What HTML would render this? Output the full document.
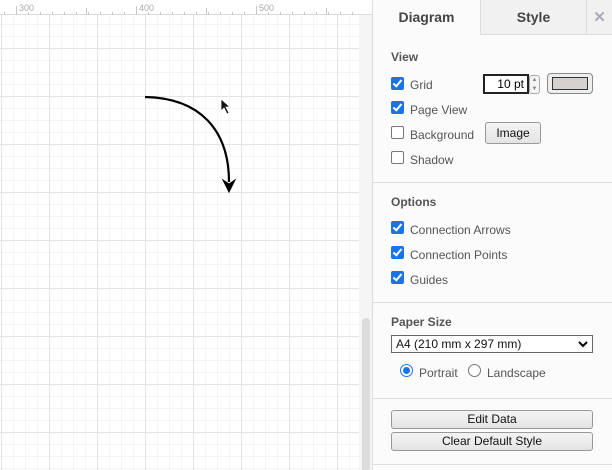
<!DOCTYPE html>
<html><head><style>
*{box-sizing:border-box;margin:0;padding:0}
body{width:612px;height:470px;overflow:hidden;font-family:"Liberation Sans",sans-serif;background:#fff;position:relative}
.abs{position:absolute}
.cv{left:0;top:15px;width:359px;height:455px;
background-color:#fff;
background-image:
linear-gradient(to right,#e4e4e8 1px,transparent 1px),
linear-gradient(to bottom,#e4e4e8 1px,transparent 1px),
linear-gradient(to right,#f4f4f6 1px,transparent 1px),
linear-gradient(to bottom,#f4f4f6 1px,transparent 1px);
background-size:48px 48px,48px 48px,12px 12px,12px 12px;
background-position:1px 33px,1px 33px,1px 33px,1px 33px}
.ruler{left:0;top:0;width:372px;height:15px;background:#fff;border-bottom:1px solid #ddd;font-size:9px;color:#aaa}
.ruler span{position:absolute;top:3px}
.sb{left:359px;top:15px;width:13px;height:455px;background:#f5f5f5}
.thumb{left:362px;top:318px;width:8px;height:152px;background:#dcdcdc;border-radius:4px 4px 0 0}
.panel{left:372px;top:0;width:240px;height:470px;background:#fbfbfb;border-left:1px solid #ddd}
.tab{top:0;height:35px;font-size:14px;font-weight:bold;color:#444;text-align:center;line-height:35px}
.h{font-size:12px;font-weight:bold;color:#555}
.lbl{font-size:12px;color:#555}
.cb{width:13px;height:13px;border-radius:2px}
.cb.on{background:#1a73e8}
.cb.on::after{content:"";position:absolute;left:4px;top:1px;width:3px;height:7px;border:solid #fff;border-width:0 2px 2px 0;transform:rotate(40deg)}
.cb.off{border:1px solid #777;background:#fff}
.sep{left:372px;width:240px;height:1px;background:#ddd}
.btn{border:1px solid #999;border-radius:3px;background:linear-gradient(#f4f4f4,#e4e4e4);font-size:12px;color:#111;text-align:center}
</style></head><body>
<div class="abs cv"></div>
<div class="abs ruler"><span style="left:19px">300</span><span style="left:139px">400</span><span style="left:259px">500</span></div>
<svg class="abs" style="left:0;top:0" width="372" height="470">
<g stroke="#c8c8c8" stroke-width="1">
<path d="M4.5 12v3M16.5 12v3M28.5 12v3M40.5 12v3M52.5 12v3M64.5 12v3M76.5 12v3M88.5 12v3M100.5 12v3M112.5 12v3M124.5 12v3M136.5 12v3M148.5 12v3M160.5 12v3M172.5 12v3M184.5 12v3M196.5 12v3M208.5 12v3M220.5 12v3M232.5 12v3M244.5 12v3M256.5 12v3M268.5 12v3M280.5 12v3M292.5 12v3M304.5 12v3M316.5 12v3M328.5 12v3M340.5 12v3M352.5 12v3"/>
<path d="M16.5 6v9M136.5 6v9M256.5 6v9M86.5 8v7M206.5 8v7M326.5 8v7"/>
</g>
<path d="M145 97 C200 98 229 130 229 182" fill="none" stroke="#000" stroke-width="2.2"/>
<path d="M223 180 L229 192 L235 180 L229 184 Z" fill="#000" stroke="#000" stroke-width="1"/>
<path d="M221 99 L221 111 L224 108 L227 114 L229 113 L226 107 L230 107 Z" fill="#111" stroke="#fff" stroke-width="0.8"/>
</svg>
<div class="abs sb"></div>
<div class="abs thumb"></div>
<div class="abs panel"></div>
<div class="abs tab" style="left:373px;width:107px;background:#fbfbfb">Diagram</div>
<div class="abs tab" style="left:480px;width:106px;background:#f1f1f1;border-left:1px solid #ddd;border-bottom:1px solid #ddd">Style</div>
<div class="abs tab" style="left:586px;width:26px;background:#f1f1f1;border-left:1px solid #ddd;border-bottom:1px solid #ddd;color:#aab;font-size:15px">✕</div>

<div class="abs h" style="left:391px;top:50px">View</div>
<div class="abs cb on" style="left:391px;top:77px"></div>
<div class="abs lbl" style="left:410px;top:78px">Grid</div>
<div class="abs cb on" style="left:391px;top:101px"></div>
<div class="abs lbl" style="left:410px;top:103px">Page View</div>
<div class="abs cb off" style="left:391px;top:126px"></div>
<div class="abs lbl" style="left:410px;top:128px">Background</div>
<div class="abs cb off" style="left:391px;top:151px"></div>
<div class="abs lbl" style="left:410px;top:153px">Shadow</div>
<div class="abs" style="left:483px;top:74px;width:46px;height:20px;border:2px solid #222;background:#fff;font-size:12px;text-align:right;padding-right:3px;line-height:16px">10 pt</div>
<div class="abs" style="left:529px;top:75px;width:11px;height:19px;border:1px solid #aaa;border-radius:3px;background:#f4f4f4;font-size:6px;color:#888;text-align:center;line-height:9px">▲<br>▼</div>
<div class="abs" style="left:547px;top:73px;width:46px;height:21px;border:1px solid #888;border-radius:4px;background:#eee;padding:3px 4px"><div style="width:100%;height:100%;background:#d6d1d1;border:1px solid #333"></div></div>
<div class="abs btn" style="left:485px;top:122px;width:56px;height:22px;line-height:20px">Image</div>
<div class="abs sep" style="top:182px"></div>

<div class="abs h" style="left:391px;top:195px">Options</div>
<div class="abs cb on" style="left:391px;top:221px"></div>
<div class="abs lbl" style="left:410px;top:223px">Connection Arrows</div>
<div class="abs cb on" style="left:391px;top:246px"></div>
<div class="abs lbl" style="left:410px;top:248px">Connection Points</div>
<div class="abs cb on" style="left:391px;top:271px"></div>
<div class="abs lbl" style="left:410px;top:273px">Guides</div>
<div class="abs sep" style="top:302px"></div>

<div class="abs h" style="left:391px;top:315px">Paper Size</div>
<div class="abs" style="left:391px;top:335px;width:202px;height:18px;border:1px solid #666;background:#fff;font-size:12px;line-height:16px;padding-left:4px;color:#111">A4 (210 mm x 297 mm)<svg style="position:absolute;right:4px;top:5px" width="10" height="7"><path d="M1 1l4 4 4-4" fill="none" stroke="#000" stroke-width="2"/></svg></div>
<div class="abs" style="left:400px;top:364px;width:13px;height:13px;border-radius:50%;border:1px solid #1a73e8;background:#fff"><div style="margin:2px;width:7px;height:7px;border-radius:50%;background:#1a73e8"></div></div>
<div class="abs lbl" style="left:419px;top:366px">Portrait</div>
<div class="abs" style="left:468px;top:364px;width:13px;height:13px;border-radius:50%;border:1px solid #777;background:#fff"></div>
<div class="abs lbl" style="left:487px;top:366px">Landscape</div>
<div class="abs sep" style="top:398px"></div>

<div class="abs btn" style="left:391px;top:410px;width:202px;height:19px;line-height:17px">Edit Data</div>
<div class="abs btn" style="left:391px;top:432px;width:202px;height:19px;line-height:17px">Clear Default Style</div>
<div class="abs sep" style="top:464px"></div>
</body></html>
